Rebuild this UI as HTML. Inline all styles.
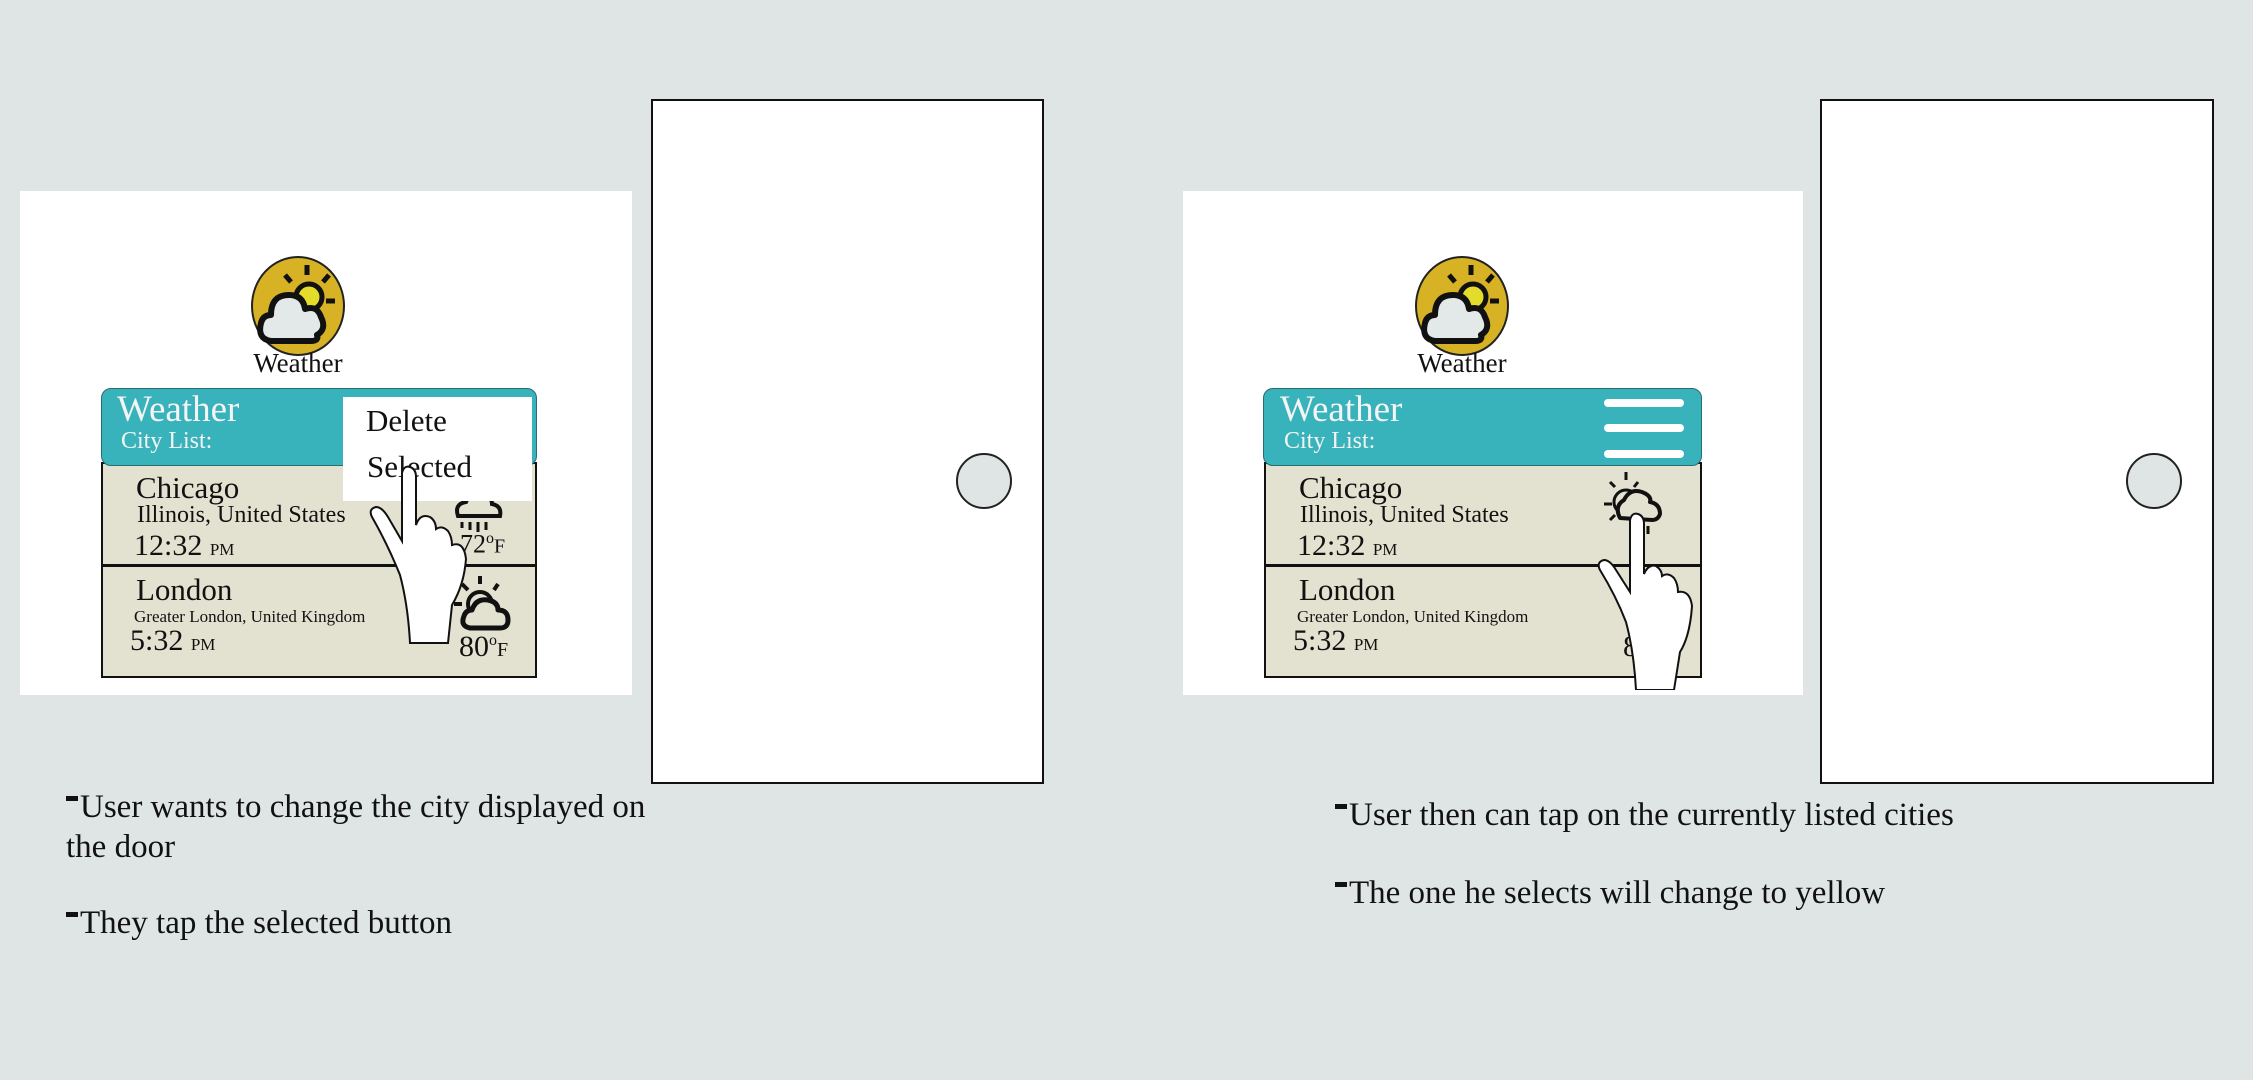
<!DOCTYPE html>
<html><head><meta charset="utf-8"><style>
body{margin:0;width:2253px;height:1080px;background:#dfe4e4;position:relative;overflow:hidden;font-family:"Liberation Serif",serif;}
.a{position:absolute;}
.panel{background:#fff;}
.door{background:#fff;border:2px solid #111;box-sizing:border-box;}
.knob{width:56px;height:56px;border-radius:50%;background:#dfe4e4;border:2px solid #222;box-sizing:border-box;}
.hdr{background:#38b3bc;border:1.5px solid #2a6c70;border-radius:10px;box-sizing:border-box;}
.row{background:#e3e1cf;border:2px solid #111;box-sizing:border-box;}
.w{color:#f4f4f4;white-space:nowrap;}
.t{color:#111;white-space:nowrap;line-height:1;}
.cap{font-size:33px;color:#111;line-height:40px;}
.dash{display:inline-block;width:12px;height:5px;background:#111;vertical-align:16px;margin-right:2px;}
</style></head><body>

<!-- LEFT -->
<div class="a panel" style="left:20px;top:191px;width:612px;height:504px"></div>
<div class="a door" style="left:651px;top:99px;width:393px;height:685px"></div>
<div class="a knob" style="left:956px;top:453px"></div>

<svg class="a" style="left:249px;top:255px" width="98" height="102" viewBox="0 0 98 102">
<ellipse cx="49" cy="51" rx="46" ry="49" fill="#d8b225" stroke="#222" stroke-width="2"/>
<circle cx="60" cy="42" r="13" fill="#e3dc2a" stroke="#111" stroke-width="5"/>
<path d="M58 10v10M36 20l6 7M80 20l-6 7M86 46h-9" stroke="#111" stroke-width="5" fill="none"/>
<path d="M22 86 Q8 84 12 68 Q14 60 22 60 Q22 40 40 40 Q54 40 56 54 Q68 50 72 62 Q78 74 68 80 Q70 86 62 86 Z" fill="#e3e9e9" stroke="#111" stroke-width="6" stroke-linejoin="round"/>
</svg>
<div class="a t" style="left:240px;top:350px;width:116px;text-align:center;font-size:27px">Weather</div>

<div class="a row" style="left:101px;top:462px;width:436px;height:104px"></div>
<div class="a row" style="left:101px;top:565px;width:436px;height:113px"></div>
<div class="a hdr" style="left:101px;top:388px;width:436px;height:78px"></div>
<div class="a w" style="left:117px;top:388px;font-size:37px">Weather</div>
<div class="a w" style="left:121px;top:428px;font-size:24px">City List:</div>

<div class="a t" style="left:136px;top:472px;font-size:31px">Chicago</div>
<div class="a t" style="left:137px;top:503px;font-size:24px">Illinois, United States</div>
<div class="a t" style="left:134px;top:531px;font-size:30px">12:32 <span style="font-size:17px">PM</span></div>
<div class="a t" style="left:460px;top:531px;font-size:26px">72<sup style="font-size:16px">o</sup><span style="font-size:20px">F</span></div>
<div class="a t" style="left:136px;top:574px;font-size:31px">London</div>
<div class="a t" style="left:134px;top:608px;font-size:17px">Greater London, United Kingdom</div>
<div class="a t" style="left:130px;top:626px;font-size:30px">5:32 <span style="font-size:17px">PM</span></div>
<div class="a t" style="left:459px;top:632px;font-size:30px">80<sup style="font-size:16px">o</sup><span style="font-size:20px">F</span></div>

<svg class="a" style="left:448px;top:488px" width="60" height="50" viewBox="0 0 60 50">
<path d="M10 28 Q6 16 18 14 Q22 4 34 6 Q44 8 44 16 Q54 18 52 28 Z" fill="none" stroke="#111" stroke-width="4"/>
<path d="M22 34v8M30 34v10M38 34v8M14 34v6" stroke="#111" stroke-width="3"/>
</svg>
<svg class="a" style="left:450px;top:572px" width="70" height="62" viewBox="0 0 70 62">
<path d="M30 4v8M12 12l6 6M48 12l-4 6M4 32h8" stroke="#111" stroke-width="4"/>
<circle cx="30" cy="32" r="12" fill="none" stroke="#111" stroke-width="4"/>
<path d="M20 56 Q10 54 14 44 Q16 38 22 38 Q26 26 38 28 Q48 30 48 38 Q58 38 58 48 Q58 56 50 56 Z" fill="#e3e1cf" stroke="#111" stroke-width="5" stroke-linejoin="round"/>
</svg>

<div class="a" style="left:343px;top:397px;width:189px;height:104px;background:#fff"></div>
<div class="a t" style="left:366px;top:405px;font-size:31px">Delete</div>
<div class="a t" style="left:367px;top:451px;font-size:31px">Selected</div>

<svg class="a" style="left:368px;top:465px" width="110" height="180" viewBox="0 0 110 180">
<path d="M32 110 Q20 80 4 52 Q0 44 8 42 Q14 42 20 52 L34 76 L34 8 Q36 0 42 2 Q48 4 48 12 L48 60 Q52 48 62 52 Q68 56 68 64 Q74 60 80 66 Q84 72 84 80 Q96 76 98 94 Q96 120 84 140 L80 178 L42 178 Q40 140 32 110 Z" fill="#fff" stroke="#111" stroke-width="2"/>
</svg>

<div class="a cap" style="left:66px;top:787px;width:590px"><span class="dash"></span>User wants to change the city displayed on the door</div>
<div class="a cap" style="left:66px;top:903px"><span class="dash"></span>They tap the selected button</div>

<!-- RIGHT -->
<div class="a panel" style="left:1183px;top:191px;width:620px;height:504px"></div>
<div class="a door" style="left:1820px;top:99px;width:394px;height:685px"></div>
<div class="a knob" style="left:2126px;top:453px"></div>

<svg class="a" style="left:1413px;top:255px" width="98" height="102" viewBox="0 0 98 102">
<ellipse cx="49" cy="51" rx="46" ry="49" fill="#d8b225" stroke="#222" stroke-width="2"/>
<circle cx="60" cy="42" r="13" fill="#e3dc2a" stroke="#111" stroke-width="5"/>
<path d="M58 10v10M36 20l6 7M80 20l-6 7M86 46h-9" stroke="#111" stroke-width="5" fill="none"/>
<path d="M22 86 Q8 84 12 68 Q14 60 22 60 Q22 40 40 40 Q54 40 56 54 Q68 50 72 62 Q78 74 68 80 Q70 86 62 86 Z" fill="#e3e9e9" stroke="#111" stroke-width="6" stroke-linejoin="round"/>
</svg>
<div class="a t" style="left:1404px;top:350px;width:116px;text-align:center;font-size:27px">Weather</div>

<div class="a row" style="left:1264px;top:462px;width:438px;height:104px"></div>
<div class="a row" style="left:1264px;top:565px;width:438px;height:113px"></div>
<div class="a hdr" style="left:1263px;top:388px;width:439px;height:78px"></div>
<div class="a w" style="left:1280px;top:388px;font-size:37px">Weather</div>
<div class="a w" style="left:1284px;top:428px;font-size:24px">City List:</div>
<div class="a" style="left:1604px;top:399px;width:80px;height:8px;background:#fff;border-radius:4px"></div>
<div class="a" style="left:1604px;top:424px;width:80px;height:8px;background:#fff;border-radius:4px"></div>
<div class="a" style="left:1604px;top:450px;width:80px;height:8px;background:#fff;border-radius:4px"></div>

<div class="a t" style="left:1299px;top:472px;font-size:31px">Chicago</div>
<div class="a t" style="left:1300px;top:503px;font-size:24px">Illinois, United States</div>
<div class="a t" style="left:1297px;top:531px;font-size:30px">12:32 <span style="font-size:17px">PM</span></div>
<div class="a t" style="left:1299px;top:574px;font-size:31px">London</div>
<div class="a t" style="left:1297px;top:608px;font-size:17px">Greater London, United Kingdom</div>
<div class="a t" style="left:1293px;top:626px;font-size:30px">5:32 <span style="font-size:17px">PM</span></div>
<div class="a t" style="left:1623px;top:632px;font-size:30px">8</div>

<svg class="a" style="left:1604px;top:470px" width="64" height="70" viewBox="0 0 64 70">
<path d="M22 2v8M6 12l5 5M34 12l-4 5M0 34h8M6 50l5-5" stroke="#111" stroke-width="3"/>
<circle cx="22" cy="32" r="12" fill="none" stroke="#111" stroke-width="3"/>
<path d="M16 48 Q10 36 20 30 Q26 18 38 22 Q48 26 46 32 Q56 34 56 44 Q54 50 48 50 Z" fill="#e3e1cf" stroke="#111" stroke-width="4" stroke-linejoin="round"/>
<path d="M36 56v10M44 56v8" stroke="#111" stroke-width="3"/>
</svg>

<svg class="a" style="left:1596px;top:512px" width="100" height="178" viewBox="0 0 100 178">
<path d="M30 110 Q20 84 4 58 Q0 50 8 48 Q14 48 20 58 L34 80 L34 8 Q36 0 42 2 Q48 4 48 12 L48 62 Q52 52 60 54 Q66 58 66 64 Q72 60 78 66 Q82 72 82 80 Q94 78 96 94 Q94 124 84 140 L78 178 L40 178 Q38 140 30 110 Z" fill="#fff" stroke="#111" stroke-width="2"/>
</svg>

<div class="a cap" style="left:1335px;top:795px"><span class="dash"></span>User then can tap on the currently listed cities</div>
<div class="a cap" style="left:1335px;top:873px"><span class="dash"></span>The one he selects will change to yellow</div>

</body></html>
